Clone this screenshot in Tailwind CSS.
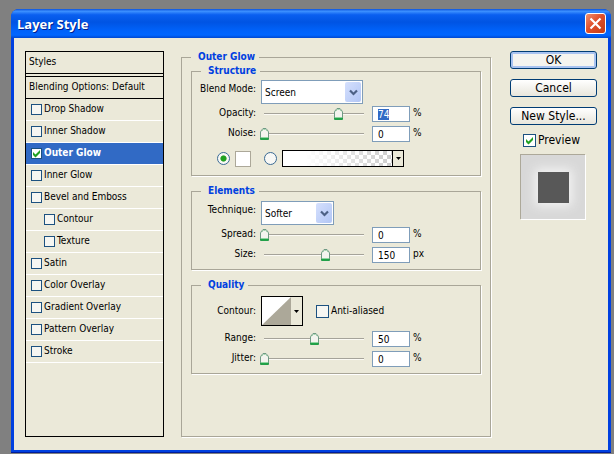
<!DOCTYPE html>
<html lang="en">
<head>
  <meta charset="UTF-8" />
  <meta name="viewport" content="width=device-width, initial-scale=1.0" />
  <title>Layer Style</title>
  <script src="https://cdn.jsdelivr.net/npm/@tailwindcss/browser@4"></script>
  <style>
    body { font-family: 'DejaVu Sans Condensed', 'DejaVu Sans', sans-serif; }

    /* XP check mark */
    input[type=checkbox]:checked {
      background: #fff url("data:image/svg+xml,%3Csvg xmlns='http://www.w3.org/2000/svg' viewBox='0 0 9 9'%3E%3Cpath d='M1 3v3l2.500 2.500L8 4V1L3.500 5.500z' fill='%2321a121'/%3E%3C/svg%3E") center / 9px 9px no-repeat;
    }

    /* XP slider: etched track with a small pointed thumb */
    input[type=range]::-webkit-slider-runnable-track {
      height: 12px;
      background: linear-gradient(#a5a39a 0 1px, #fbfaf4 1px 2px) 4px 5px / 100px 2px no-repeat;
    }
    input[type=range]::-webkit-slider-thumb {
      -webkit-appearance: none;
      width: 9px;
      height: 12px;
      background: url("data:image/svg+xml,%3Csvg xmlns='http://www.w3.org/2000/svg' viewBox='0 0 9 12'%3E%3Cpath d='M.5 11.500V3.500L3 .5h3l2.500 3v8z' fill='%23f4f4ef' stroke='%236f9a84'/%3E%3Cpath d='M1.500 3.500 3.500 1.500h2l2 2' fill='none' stroke='%23a4d4ae'/%3E%3Cpath d='M1 9h7v1H1z' fill='%238fd6a0'/%3E%3Cpath d='M0 10h9v1l-1 1H1l-1-1z' fill='%2321a148'/%3E%3C/svg%3E") no-repeat;
    }
  </style>
</head>
<body class="min-h-screen flex flex-col bg-[#808080] pt-[9px] pl-[11px] pr-[3px] pb-px text-[10px] leading-[14px] text-black">
  <div class="flex-1 flex flex-col rounded-t-lg bg-[#0040e0] border-b border-[#001c9c]">
    <!-- Title bar -->
    <header class="h-[29px] flex items-center justify-between pl-[6px] pr-[5px] rounded-t-lg bg-linear-[180deg,#0a52dc_0%,#3c90ff_8%,#0a5ff0_20%,#0054e3_45%,#0062fa_75%,#0066ff_90%,#0048d0_100%]">
      <h1 class="pt-px font-['Open_Sans'] font-bold text-[13px] leading-4 text-white text-shadow-[1px_1px_0_#00208c]">Layer Style</h1>
      <button aria-label="Close" class="size-[21px] flex items-center justify-center rounded-[3px] border border-white bg-linear-[135deg,#f09070,#e0502c_45%,#c43c14]">
        <svg class="size-[13px]" viewBox="0 0 13 13" fill="none" stroke="#fff" stroke-width="2.2"><path d="M1.500 1.500l10 10M11.500 1.500l-10 10" /></svg>
      </button>
    </header>

    <main class="flex-1 flex mx-[3px] mb-[2px] bg-[#ebe9d9] px-[11px] pt-3 pb-[13px]">
      <!-- Effects list -->
      <section class="w-[139px] mt-px mr-[17px] border border-black">
        <h2 class="h-[22px] pl-[3px] leading-5 border-b border-black">Styles</h2>
        <h2 class="h-[23px] mt-[2px] pl-[3px] leading-5 border-y border-black">Blending Options: Default</h2>
        <ul>
          <li class="h-[22px] border-b border-white"><label class="h-full flex items-center gap-[2px] pl-[5px] pb-px"><input type="checkbox" class="appearance-none size-[11px] border border-[#1c5180] bg-[#f6f6f2]">Drop Shadow</label></li>
          <li class="h-[22px] border-b border-white"><label class="h-full flex items-center gap-[2px] pl-[5px] pb-px"><input type="checkbox" class="appearance-none size-[11px] border border-[#1c5180] bg-[#f6f6f2]">Inner Shadow</label></li>
          <li class="h-[22px] border-b border-white"><label class="h-full flex items-center gap-[2px] pl-[5px] pb-px bg-[#316ac5] text-white font-bold"><input type="checkbox" checked class="appearance-none size-[11px] border border-[#1c5180] bg-[#f6f6f2]">Outer Glow</label></li>
          <li class="h-[22px] border-b border-white"><label class="h-full flex items-center gap-[2px] pl-[5px] pb-px"><input type="checkbox" class="appearance-none size-[11px] border border-[#1c5180] bg-[#f6f6f2]">Inner Glow</label></li>
          <li class="h-[22px] border-b border-white"><label class="h-full flex items-center gap-[2px] pl-[5px] pb-px"><input type="checkbox" class="appearance-none size-[11px] border border-[#1c5180] bg-[#f6f6f2]">Bevel and Emboss</label></li>
          <li class="h-[22px] border-b border-white"><label class="h-full flex items-center gap-[2px] pl-[18px] pb-px"><input type="checkbox" class="appearance-none size-[11px] border border-[#1c5180] bg-[#f6f6f2]">Contour</label></li>
          <li class="h-[22px] border-b border-white"><label class="h-full flex items-center gap-[2px] pl-[18px] pb-px"><input type="checkbox" class="appearance-none size-[11px] border border-[#1c5180] bg-[#f6f6f2]">Texture</label></li>
          <li class="h-[22px] border-b border-white"><label class="h-full flex items-center gap-[2px] pl-[5px] pb-px"><input type="checkbox" class="appearance-none size-[11px] border border-[#1c5180] bg-[#f6f6f2]">Satin</label></li>
          <li class="h-[22px] border-b border-white"><label class="h-full flex items-center gap-[2px] pl-[5px] pb-px"><input type="checkbox" class="appearance-none size-[11px] border border-[#1c5180] bg-[#f6f6f2]">Color Overlay</label></li>
          <li class="h-[22px] border-b border-white"><label class="h-full flex items-center gap-[2px] pl-[5px] pb-px"><input type="checkbox" class="appearance-none size-[11px] border border-[#1c5180] bg-[#f6f6f2]">Gradient Overlay</label></li>
          <li class="h-[22px] border-b border-white"><label class="h-full flex items-center gap-[2px] pl-[5px] pb-px"><input type="checkbox" class="appearance-none size-[11px] border border-[#1c5180] bg-[#f6f6f2]">Pattern Overlay</label></li>
          <li class="h-[22px] border-b border-white"><label class="h-full flex items-center gap-[2px] pl-[5px] pb-px"><input type="checkbox" class="appearance-none size-[11px] border border-[#1c5180] bg-[#f6f6f2]">Stroke</label></li>
        </ul>
      </section>

      <!-- Outer Glow settings -->
      <fieldset class="flex-1 min-w-0 px-[9px] border border-[#a9a698] shadow-[1px_1px_0_#fff]">
        <legend class="bg-[#ebe9d9] pl-[7px] pr-1 font-bold text-[#0040e0]">Outer Glow</legend>

        <fieldset class="pt-[2px] pb-2 border border-[#a9a698] shadow-[1px_1px_0_#fff]">
          <legend class="ml-[9px] bg-[#ebe9d9] pl-[7px] pr-1 font-bold text-[#0040e0]">Structure</legend>
          <div class="flex items-start gap-[5px]">
            <label for="blend" class="w-16 text-right leading-[18px]">Blend Mode:</label>
            <div class="relative">
              <select id="blend" class="appearance-none block w-[102px] h-6 pl-[3px] pt-px border border-[#7f9db9] bg-white"><option>Screen</option></select>
              <span class="absolute right-[2px] top-[2px] w-4 h-5 flex items-center justify-center rounded-[2px] bg-linear-to-br from-[#d5e0fd] to-[#b2c6f5] pointer-events-none">
                <svg class="w-[9px] h-[7px]" viewBox="0 0 9 7" fill="none" stroke="#4d6185" stroke-width="2.2"><path d="M1 1.500l3.500 3.500L8 1.500" /></svg>
              </span>
            </div>
          </div>
          <div class="mt-[2px] flex items-center gap-1">
            <label for="opacity" class="w-16 pb-[2px] text-right">Opacity:</label>
            <input type="range" value="75" aria-label="Opacity slider" class="appearance-none w-[108px] h-3 bg-transparent">
            <input id="opacity" type="text" value="74" class="w-[38px] h-4 pl-[5px] pt-px border border-[#7f9db9] bg-white outline-none selection:bg-[#316ac5] selection:text-white">
            <span class="-ml-px pb-[2px]">%</span>
          </div>
          <div class="mt-1 flex items-center gap-1">
            <label for="noise" class="w-16 pb-[2px] text-right">Noise:</label>
            <input type="range" value="0" aria-label="Noise slider" class="appearance-none w-[108px] h-3 bg-transparent">
            <input id="noise" type="text" value="0" class="w-[38px] h-4 pl-[5px] pt-px border border-[#7f9db9] bg-white outline-none">
            <span class="-ml-px pb-[2px]">%</span>
          </div>
          <div class="mt-2 flex items-center pl-[25px]">
            <input type="radio" name="fill" checked aria-label="Solid color" class="appearance-none size-[13px] rounded-full border border-[#3a6a94] bg-[#f8f8f5] checked:bg-radial checked:from-[#21a121] checked:from-35% checked:to-[#f8f8f5] checked:to-45%">
            <button aria-label="Glow color" class="ml-[5px] size-4 border border-[#aca899] bg-white"></button>
            <input type="radio" name="fill" aria-label="Gradient" class="ml-[13px] appearance-none size-[13px] rounded-full border border-[#3a6a94] bg-[#f8f8f5]">
            <button aria-label="Gradient picker" class="ml-[5px] w-[122px] h-[17px] flex border border-black bg-white">
              <span class="flex-1 h-full bg-[repeating-conic-gradient(#ccc_0_25%,#fff_0_50%)] bg-size-[8px_8px]">
                <span class="block size-full bg-linear-to-r from-white from-20% to-white/0"></span>
              </span>
              <span class="w-[11px] h-full flex items-center justify-center border-l border-black bg-[#ebe9d9]">
                <svg class="w-[5px] h-[3px]" viewBox="0 0 5 3"><path d="M0 0h5L2.500 3z" /></svg>
              </span>
            </button>
          </div>
        </fieldset>

        <fieldset class="mt-2 pt-[3px] pb-[6px] border border-[#a9a698] shadow-[1px_1px_0_#fff]">
          <legend class="ml-[9px] bg-[#ebe9d9] pl-[7px] pr-1 font-bold text-[#0040e0]">Elements</legend>
          <div class="flex items-start gap-[5px]">
            <label for="technique" class="w-16 text-right leading-[18px]">Technique:</label>
            <div class="relative">
              <select id="technique" class="appearance-none block w-[73px] h-6 pl-[3px] pt-px border border-[#7f9db9] bg-white"><option>Softer</option></select>
              <span class="absolute right-[2px] top-[2px] w-4 h-5 flex items-center justify-center rounded-[2px] bg-linear-to-br from-[#d5e0fd] to-[#b2c6f5] pointer-events-none">
                <svg class="w-[9px] h-[7px]" viewBox="0 0 9 7" fill="none" stroke="#4d6185" stroke-width="2.2"><path d="M1 1.500l3.500 3.500L8 1.500" /></svg>
              </span>
            </div>
          </div>
          <div class="mt-[2px] flex items-center gap-1">
            <label for="spread" class="w-16 pb-[2px] text-right">Spread:</label>
            <input type="range" value="0" aria-label="Spread slider" class="appearance-none w-[108px] h-3 bg-transparent">
            <input id="spread" type="text" value="0" class="w-[38px] h-4 pl-[5px] pt-px border border-[#7f9db9] bg-white outline-none">
            <span class="-ml-px pb-[2px]">%</span>
          </div>
          <div class="mt-1 flex items-center gap-1">
            <label for="size" class="w-16 pb-[2px] text-right">Size:</label>
            <input type="range" max="250" value="154" aria-label="Size slider" class="appearance-none w-[108px] h-3 bg-transparent">
            <input id="size" type="text" value="150" class="w-[38px] h-4 pl-[5px] pt-px border border-[#7f9db9] bg-white outline-none">
            <span class="-ml-px pb-[2px]">px</span>
          </div>
        </fieldset>

        <fieldset class="mt-2 pt-1 pb-[6px] border border-[#a9a698] shadow-[1px_1px_0_#fff]">
          <legend class="ml-[9px] bg-[#ebe9d9] pl-[7px] pr-1 font-bold text-[#0040e0]">Quality</legend>
          <div class="flex items-center gap-[5px]">
            <label for="contour" class="w-16 text-right">Contour:</label>
            <button id="contour" class="w-[42px] h-[30px] flex border border-black bg-[#ebe9d9]">
              <svg class="w-[29px] h-7" viewBox="0 0 29 28" preserveAspectRatio="none"><path d="M0 0h29v28H0z" fill="#fff" /><path d="M29 0v28H0z" fill="#aca899" /></svg>
              <span class="flex-1 h-full flex items-center justify-center">
                <svg class="w-[5px] h-[3px]" viewBox="0 0 5 3"><path d="M0 0h5L2.500 3z" /></svg>
              </span>
            </button>
            <label class="ml-2 flex items-center gap-[2px]"><input type="checkbox" class="appearance-none size-[13px] border border-[#1c5180] bg-[#f6f6f2]">Anti-aliased</label>
          </div>
          <div class="mt-[5px] flex items-center gap-1">
            <label for="range" class="w-16 pb-[2px] text-right">Range:</label>
            <input type="range" value="50" aria-label="Range slider" class="appearance-none w-[108px] h-3 bg-transparent">
            <input id="range" type="text" value="50" class="w-[38px] h-4 pl-[5px] pt-px border border-[#7f9db9] bg-white outline-none">
            <span class="-ml-px pb-[2px]">%</span>
          </div>
          <div class="mt-1 flex items-center gap-1">
            <label for="jitter" class="w-16 pb-[2px] text-right">Jitter:</label>
            <input type="range" value="0" aria-label="Jitter slider" class="appearance-none w-[108px] h-3 bg-transparent">
            <input id="jitter" type="text" value="0" class="w-[38px] h-4 pl-[5px] pt-px border border-[#7f9db9] bg-white outline-none">
            <span class="-ml-px pb-[2px]">%</span>
          </div>
        </fieldset>
      </fieldset>

      <!-- Dialog buttons and preview -->
      <aside class="w-[87px] mt-px ml-[19px] flex flex-col text-[12px]">
        <button class="h-[18px] leading-4 rounded-[3px] border border-[#003c74] bg-[#f5f4ef] inset-shadow-[0_0_0_2px_#a9c3f0]">OK</button>
        <button class="mt-[10px] h-[18px] leading-4 rounded-[3px] border border-[#003c74] bg-linear-to-b from-white to-[#e8e6dc]">Cancel</button>
        <button class="mt-[10px] h-[18px] leading-4 rounded-[3px] border border-[#003c74] bg-linear-to-b from-white to-[#e8e6dc]">New Style...</button>
        <label class="mt-2 ml-[13px] flex items-center gap-[2px]"><input type="checkbox" checked class="appearance-none size-[13px] border border-[#1c5180] bg-[#f6f6f2]">Preview</label>
        <div class="mt-[7px] ml-[10px] size-[65px] flex items-center justify-center border-t border-l border-[#aca899] bg-[#d8d8d8] shadow-[1px_1px_0_#fff]">
          <div class="size-[31px] bg-[#585858] shadow-[0_0_10px_3px_#f4f4f4]"></div>
        </div>
      </aside>
    </main>
  </div>

  <script>
    const opacity = document.getElementById("opacity");
    opacity.focus();
    opacity.select();
  </script>
</body>
</html>
